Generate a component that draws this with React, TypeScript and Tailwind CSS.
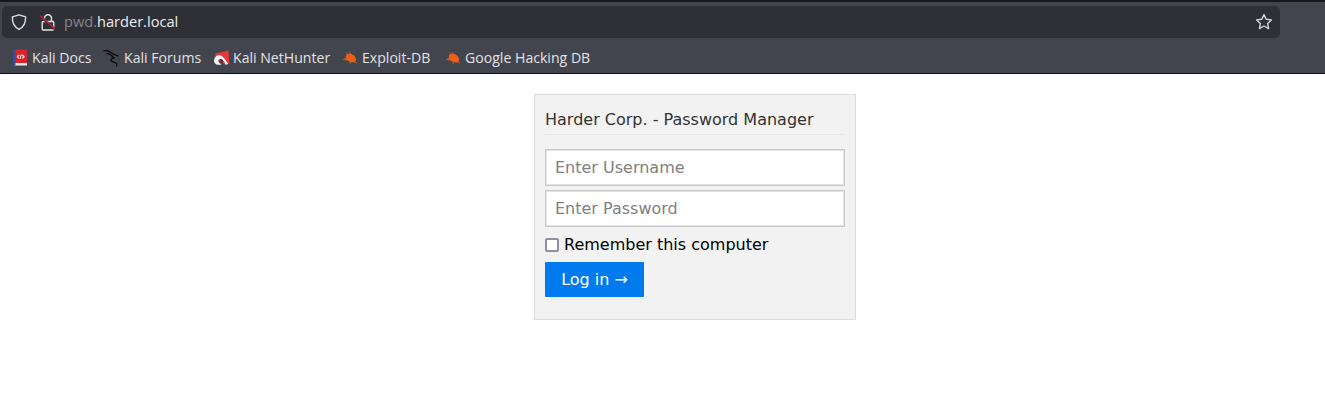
const dejavu = "font-['DejaVu_Sans',sans-serif]";

function ShieldIcon() {
    return (
        <svg width="18" height="18" viewBox="0 0 18 18" fill="none" stroke="#dedee0" strokeWidth="1.4" className="shrink-0">
            <path d="M9 1.8 L15.6 3.8 C15.9 9.5 14 13.9 9 16.4 C4 13.9 2.1 9.5 2.4 3.8 Z" strokeLinejoin="round" />
        </svg>
    );
}

function LockOffIcon() {
    return (
        <svg width="18" height="18" viewBox="0 0 18 18" fill="none" className="shrink-0">
            <path d="M5.5 8.5V5.2a3.5 3.5 0 0 1 7 0V8.5" stroke="#e4e4e6" strokeWidth="1.4" />
            <rect x="3.2" y="8.5" width="11.6" height="8.5" rx="1.2" stroke="#e4e4e6" strokeWidth="1.4" />
            <path d="M1.5 3.4 L16 16.4" stroke="#2f3036" strokeWidth="2.4" />
            <path d="M1 2.5 L16 16" stroke="#c9203f" strokeWidth="1.3" />
        </svg>
    );
}

function StarIcon() {
    return (
        <svg width="18" height="18" viewBox="0 0 18 18" fill="none" stroke="#d4d4d6" strokeWidth="1.4" strokeLinejoin="round" className="shrink-0">
            <path d="M9 1.6 L11.2 6.3 L16.4 6.9 L12.6 10.4 L13.6 15.6 L9 13 L4.4 15.6 L5.4 10.4 L1.6 6.9 L6.8 6.3 Z" />
        </svg>
    );
}

function DocsIcon() {
    return (
        <svg width="16" height="17" viewBox="0 0 16 17" className="shrink-0">
            <rect x="2" y="0.5" width="13" height="14" fill="#d8232a" />
            <rect x="2" y="14" width="13" height="2.5" fill="#e8e8e8" />
            <rect x="1" y="0.5" width="2.5" height="16" fill="#2b4fa8" />
            <path d="M7 6 L5.4 7.7 L7 9.4 M10.4 6 L12 7.7 L10.4 9.4" fill="none" stroke="#fff" strokeWidth="1.2" />
            <path d="M9.4 5.4 L8 10" fill="none" stroke="#fff" strokeWidth="1" />
        </svg>
    );
}

function DragonIcon() {
    return (
        <svg width="18" height="18" viewBox="0 0 18 18" fill="none" stroke="#0b0b0d" strokeWidth="1.3" className="shrink-0 -ml-[1px]">
            <path d="M0.5 2 C3 1 6 1.8 8 3.5 C10 5.5 12.5 6.5 15.5 7 M3.5 4.5 C6 4.5 9 6.5 11 9 C9 9.2 7.5 10 8 11.5 C8.5 13 11.5 13 13 14 C14 14.8 14 16 13.5 17.5" />
        </svg>
    );
}

function NetHunterIcon() {
    return (
        <svg width="17" height="17" viewBox="0 0 17 17" className="shrink-0">
            <path d="M2 4.5 L15.5 1.5 L16.5 14 L12 15.5 L3 9 Z" fill="#e8343c" />
            <path d="M1 11 C1.5 6.5 6.5 5 9.5 7.5 C12 9.5 13 12.5 15.5 15 L12.5 15.8 C11.5 13 10 10.5 8 10 C6 9.5 5 11 5.5 12.5 C6 13.5 7.5 15 8.5 15.8 L4 15.8 C2 15 0.8 13 1 11 Z" fill="#f2f2f2" />
            <path d="M7 10 C8.5 10 10 11 10.5 13 L8 12.5 Z" fill="#2a2b30" />
        </svg>
    );
}

function BugIcon() {
    return (
        <svg width="16" height="14" viewBox="0 0 16 14" className="shrink-0">
            <ellipse cx="9" cy="7" rx="5.6" ry="3.7" fill="#ee5f18" transform="rotate(32 9 7)" />
            <path d="M0.5 8.5 L6 5.5 L6.5 10 Z" fill="#e8611f" opacity="0.8" />
            <path d="M4 1.5 L8 5 M7 0.8 L10 4 M11 10.5 L15 12 M7 9.5 L8.5 13" stroke="#e8611f" strokeWidth="1" opacity="0.75" />
        </svg>
    );
}

const bookmarks = [
    { label: "Kali Docs", icon: <DocsIcon />, width: "w-[92px]" },
    { label: "Kali Forums", icon: <DragonIcon />, width: "w-[109px]" },
    { label: "Kali NetHunter", icon: <NetHunterIcon />, width: "w-[129px]" },
    { label: "Exploit-DB", icon: <BugIcon />, width: "w-[103px]" },
    { label: "Google Hacking DB", icon: <BugIcon />, width: "w-[150px]" },
];

const inputClass = "block w-[300px] h-[37px] px-[9px] text-[16px] bg-white border border-[#c8c8c8] shadow-[inset_0_0_0_1px_#e4e4e4] outline-none placeholder:text-[#808080]";

export default function App() {
    return (
        <div className="min-h-[404px] bg-white">
            <div className="h-[74px] bg-[#42454e] border-t-2 border-t-[#18181c] border-b border-b-[#0c0c0d] font-['Open_Sans',sans-serif]">
                <div className="flex items-center h-[32px] w-[1278px] ml-[2px] mt-[4px] pl-[8px] pr-[7px] rounded-[5px] bg-[#2f3036]">
                    <ShieldIcon />
                    <div className="ml-[11px]"><LockOffIcon /></div>
                    <span className="ml-[7px] text-[14.6px] text-[#ececee]">
                        <span className="text-[#85868b]">pwd.</span>harder.local
                    </span>
                    <div className="ml-auto"><StarIcon /></div>
                </div>
                <div className="flex items-center h-[26px] mt-[7px] pl-[12px]">
                    {bookmarks.map((b) => (
                        <div key={b.label} className={`flex items-center gap-[4px] shrink-0 ${b.width}`}>
                            <div className="flex justify-center w-[16px]">{b.icon}</div>
                            <span className="text-[14.1px] text-[#e2e2e5] whitespace-nowrap">{b.label}</span>
                        </div>
                    ))}
                </div>
            </div>

            <div className="flex justify-center pt-[20px] pl-[65px]">
                <div className={`w-[322px] h-[226px] bg-[#f2f2f2] border border-[#dddddd] px-[10px] ${dejavu}`}>
                    <div className="h-[40px] pt-[14px] text-[16px] leading-[22px] text-[#333333] border-b border-b-[#e6e6e6]">
                        Harder Corp. - Password Manager
                    </div>
                    <input className={`${inputClass} mt-[14px]`} placeholder="Enter Username" />
                    <input className={`${inputClass} mt-[4px]`} placeholder="Enter Password" />
                    <label className="flex items-center h-[24px] mt-[6px] text-[16px] text-black">
                        <span className="w-[14px] h-[14px] rounded-[2px] bg-white border-2 border-[#8f8f9d]" />
                        <span className="ml-[5px]">Remember this computer</span>
                    </label>
                    <button className="block w-[99px] h-[35px] mt-[5px] bg-[#007bed] text-white text-[16px] rounded-[1px] text-center">
                        Log in →
                    </button>
                </div>
            </div>
        </div>
    );
}
